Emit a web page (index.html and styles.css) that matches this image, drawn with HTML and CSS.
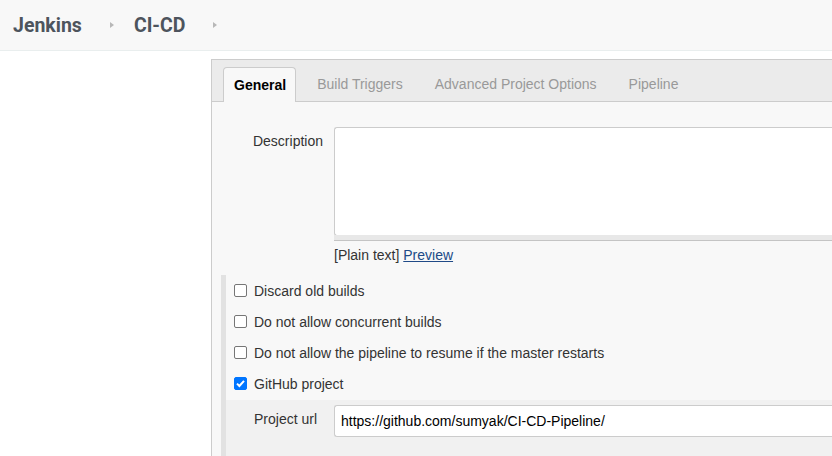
FILE: index.html
```html
<!DOCTYPE html>
<html>
<head>
<meta charset="utf-8">
<link rel="stylesheet" href="styles.css">
</head>
<body>
<header class="topbar">
  <a class="crumb">Jenkins</a>
  <span class="arrow"></span>
  <a class="crumb">CI-CD</a>
  <span class="arrow"></span>
</header>
<div class="page">
  <aside class="side"></aside>
  <main class="config">
    <nav class="tabs">
      <div class="tab active">General</div>
      <div class="tab">Build Triggers</div>
      <div class="tab">Advanced Project Options</div>
      <div class="tab">Pipeline</div>
    </nav>
    <div class="body">
      <div class="field">
        <label class="flabel">Description</label>
        <div class="fvalue">
          <div class="textarea"></div>
          <div class="handle"></div>
          <div class="hint">[Plain text] <a class="link">Preview</a></div>
        </div>
      </div>
      <section class="section">
        <div class="check"><span class="box"></span><span>Discard old builds</span></div>
        <div class="check"><span class="box"></span><span>Do not allow concurrent builds</span></div>
        <div class="check"><span class="box"></span><span>Do not allow the pipeline to resume if the master restarts</span></div>
        <div class="check"><span class="box checked"><svg viewBox="0 0 13 13" width="13" height="13"><path d="M3 6.6 L5.4 9 L10 3.8" fill="none" stroke="#fff" stroke-width="2"/></svg></span><span>GitHub project</span></div>
        <div class="sub">
          <label class="flabel sublabel">Project url</label>
          <div class="input">https://github.com/sumyak/CI-CD-Pipeline/</div>
        </div>
      </section>
    </div>
  </main>
</div>
</body>
</html>
```

FILE: styles.css
```css
* { box-sizing: border-box; }
html, body { margin: 0; padding: 0; background: #fff; overflow: hidden; }
body { font-family: "Liberation Sans", Arial, sans-serif; font-size: 14px; color: #333; width: 832px; height: 456px; }

.topbar {
  height: 51px;
  background: #f8f8f8;
  border-bottom: 1px solid #e9eeee;
  display: flex;
  align-items: center;
  padding-left: 13px;
}
.crumb {
  font-family: Roboto, "Liberation Sans", sans-serif;
  font-weight: 700;
  font-size: 19.5px;
  color: #4d545d;
  line-height: 1;
  margin-top: 1px;
}
.arrow {
  width: 0; height: 0;
  border-left: 4px solid #b8b8b8;
  border-top: 3.5px solid transparent;
  border-bottom: 3.5px solid transparent;
  margin: 0 20px 0 28px;
}

.page { display: flex; }
.side { width: 211px; flex: none; }
.config {
  flex: none;
  width: 700px;
  margin-top: 8px;
  border-left: 1px solid #ccc;
  border-top: 1px solid #ccc;
  background: #f8f8f8;
  height: 400px;
}
.tabs {
  height: 42px;
  background: #ebebeb;
  border-bottom: 1px solid #ccc;
  display: flex;
  align-items: flex-end;
  padding-left: 11px;
}
.tab {
  height: 34px;
  padding: 0 16px;
  line-height: 35px;
  color: #999;
  font-size: 14px;
  white-space: nowrap;
}
.tab.active {
  background: #f8f8f8;
  border: 1px solid #ccc;
  border-bottom: none;
  border-radius: 4px 4px 0 0;
  color: #000;
  font-weight: 700;
  padding: 0 9px 0 10px;
  margin-bottom: -1px;
  height: 35px;
  line-height: 34px;
  margin-right: 5px;
}

.body { padding-top: 25px; }
.field { display: flex; }
.flabel {
  width: 122px;
  text-align: right;
  padding-right: 11px;
  flex: none;
}
.field .flabel { padding-top: 6px; }
.fvalue { flex: 1; }
.textarea {
  height: 109px;
  background: #fff;
  border: 1px solid #ccc;
  border-right: none;
  border-radius: 3px 0 0 3px;
}
.handle {
  height: 6px;
  background: #e8e8e8;
  border-bottom: 1px solid #c4c4c4;
  margin-top: -1px;
}
.hint { margin-top: 4px; line-height: 20px; }
.link { color: #204a87; text-decoration: underline; }

.section {
  margin-top: 10px;
  margin-left: 9px;
  border-left: 5px solid #e2e2e2;
  padding-top: 0;
  height: 300px;
}
.check {
  display: flex;
  align-items: center;
  height: 31px;
  padding-left: 8px;
}
.box {
  width: 13px; height: 13px;
  border: 1px solid #767676;
  border-radius: 2px;
  background: #fff;
  margin-right: 7px;
  flex: none;
  display: flex;
}
.box.checked { background: #0075ff; border-color: #0075ff; }
.box.checked svg { margin: -1px; }
.sub {
  display: flex;
  align-items: center;
  background: #f1f1f1;
  margin-top: 1px;
  padding: 5px 0 20px;
}
.sublabel {
  width: 108px;
  text-align: left;
  padding-left: 28px;
  padding-right: 0;
  align-self: flex-start;
  padding-top: 6px;
}
.input {
  flex: 1;
  height: 32px;
  background: #fff;
  border: 1px solid #ccc;
  border-right: none;
  border-radius: 3px 0 0 3px;
  padding-left: 6px;
  line-height: 30px;
  color: #000;
}
```
